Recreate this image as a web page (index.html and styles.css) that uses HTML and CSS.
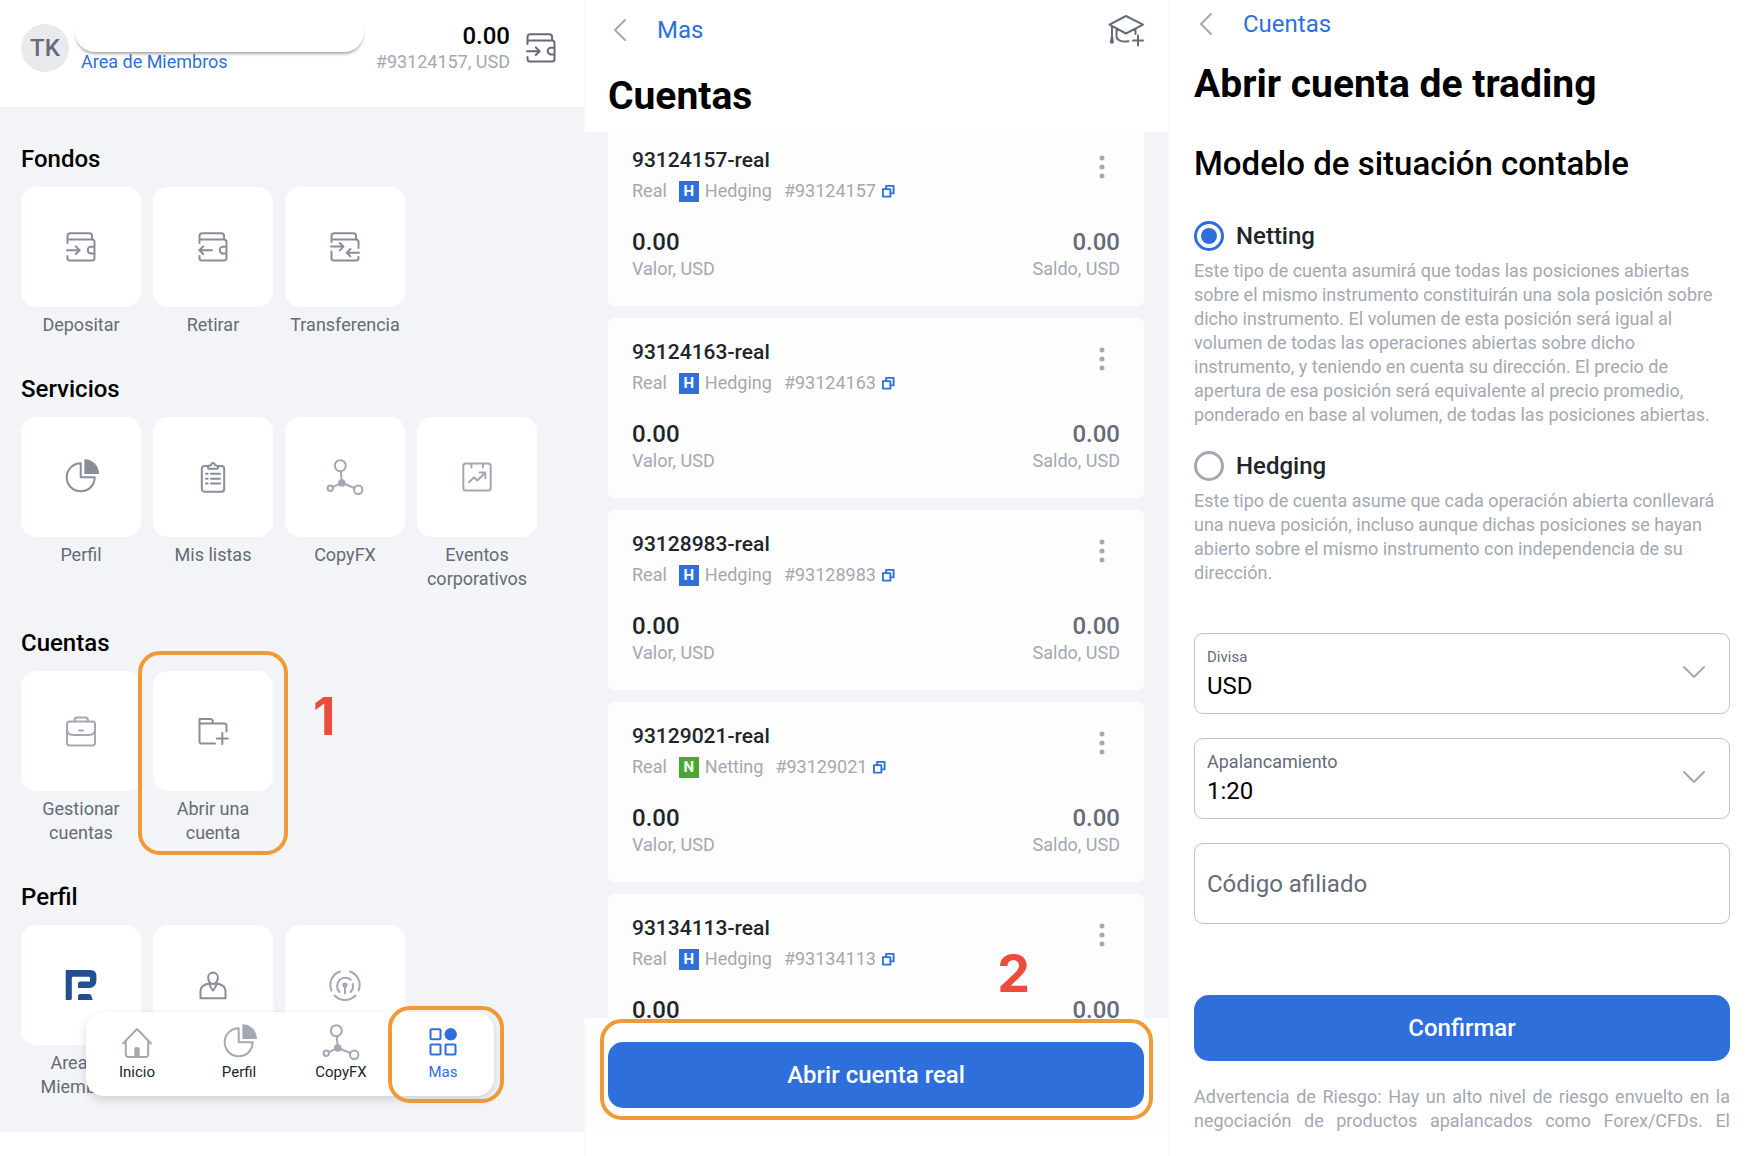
FILE: index.html
```html
<!DOCTYPE html>
<html lang="es">
<head>
<meta charset="utf-8">
<title>Cuentas</title>
<meta name="viewport" content="width=device-width, initial-scale=1">
<link rel="stylesheet" href="styles.css">
</head>
<body>
<svg class="sprite" aria-hidden="true">
  <symbol id="deposit" viewBox="0 0 36 36"><path d="M4.5 14V7a2.8 2.8 0 0 1 2.8-2.8h19a2.8 2.8 0 0 1 2.8 2.8v3.4M4.5 10.4H29a2.5 2.5 0 0 1 2.5 2.5V29a2.5 2.5 0 0 1-2.5 2.5H7A2.5 2.5 0 0 1 4.5 29v-2M31.5 17.8H28a3.3 3.3 0 0 0 0 6.6h3.5M4 21.2h12.5M12.8 17.4l3.8 3.8-3.8 3.8"/></symbol>
  <symbol id="withdraw" viewBox="0 0 36 36"><path d="M4.5 14V7a2.8 2.8 0 0 1 2.8-2.8h19a2.8 2.8 0 0 1 2.8 2.8v3.4M4.5 10.4H29a2.5 2.5 0 0 1 2.5 2.5V29a2.5 2.5 0 0 1-2.5 2.5H7A2.5 2.5 0 0 1 4.5 29v-2M31.5 17.8H28a3.3 3.3 0 0 0 0 6.6h3.5M4.5 21.2H17M8.2 17.4l-3.8 3.8L8.2 25"/></symbol>
  <symbol id="transfer" viewBox="0 0 36 36"><path d="M4.5 13V7a2.8 2.8 0 0 1 2.8-2.8h19a2.8 2.8 0 0 1 2.8 2.8v3.4M4.5 10.4H29a2.5 2.5 0 0 1 2.5 2.5V19M4.5 22.5V29A2.5 2.5 0 0 0 7 31.5h22a2.5 2.5 0 0 0 2.5-2.5v-1M4 17.6h12.5M12.8 14l3.7 3.6-3.7 3.8M32 23.8H20M23.4 20l-3.7 3.8 3.7 3.6"/></symbol>
  <symbol id="pie" viewBox="0 0 36 36"><path d="M17.7 4.3a14 14 0 1 0 14 14h-14z"/><path class="solid" d="M21.4 0.2A14.6 14.6 0 0 1 36 15H21.4z"/></symbol>
  <symbol id="list" viewBox="0 0 36 36"><path d="M13 7H9.500A2.700 2.700 0 0 0 6.800 9.700V30a2.700 2.700 0 0 0 2.700 2.700h17a2.700 2.700 0 0 0 2.700-2.700V9.700A2.700 2.700 0 0 0 26.500 7H23M13 8.200c0-1 .6-1.700 1.700-1.700 1 0 1.500-.6 1.700-1.300a1.700 1.700 0 0 1 3.200 0c.2.700.7 1.300 1.700 1.300 1.100 0 1.700.7 1.700 1.700 0 1-.6 1.600-1.500 1.600h-7c-.9 0-1.500-.6-1.500-1.600zM11 14.800h1.600M16 14.800h9M11 19.700h1.600M16 19.700h9M11 24.500h1.600M16 24.500h9"/></symbol>
  <symbol id="copyfx" viewBox="0 0 36 36"><circle cx="13.300" cy="6.700" r="5.500"/><circle class="solid" cx="14.800" cy="24" r="3.800"/><circle cx="3.300" cy="29.300" r="2.700"/><circle cx="31.200" cy="30.700" r="4.200"/><path d="M13.700 12.200l1 10M5.700 28.100l7-3.200M17.500 25l10 4"/></symbol>
  <symbol id="events" viewBox="0 0 36 36"><rect x="4.300" y="4.500" width="27.400" height="27" rx="2.500"/><path d="M12.400 5v3.500M24 5v3.500M10 23.200l5-5 3.300 3.300 7.500-7.500M20.500 13.500h5.800v5.800"/></symbol>
  <symbol id="case" viewBox="0 0 36 36"><rect x="4" y="8.500" width="28" height="24" rx="2.700"/><path d="M11.500 8.500V7.200c0-1.500 1.200-2.700 2.700-2.700h8c1.500 0 2.700 1.200 2.700 2.700v1.300M4 16c0 3.500 2 6 6 6h16c4 0 6-2.500 6-6M16 17.400h4"/></symbol>
  <symbol id="folder" viewBox="0 0 36 36"><path d="M4.500 10.500H29.500a2 2 0 0 1 2 2V18.500M20 30.500H6.500a2 2 0 0 1-2-2V6H15.500a2.200 2.200 0 0 1 2.200 2.200v2.300M27.300 20v11M21.800 25.400h11"/></symbol>
  <symbol id="brand" viewBox="0 0 36 36"><path class="solid" d="M2.700 3H28a5.400 5.400 0 0 1 5.400 5.400V14a7 7 0 0 1-7 7H15v-4.200a2.200 2.200 0 0 1 2.200-2.200H27V11a1.200 1.200 0 0 0-1.200-1.200H10A1.200 1.200 0 0 0 8.800 11v20.500A1.500 1.500 0 0 1 7.300 33H2.700zM15 33v-4a2 2 0 0 1 2-2h9a2.500 2.500 0 0 1 2.400 1.700L29.700 33z"/></symbol>
  <symbol id="person" viewBox="0 0 36 36"><path d="M14.300 16.600c-5 .8-8.800 3-8.800 7.700v7h25v-7c0-4.700-3.800-6.900-8.800-7.700M18 5.600a5 5 0 0 0-4.900 5c0 2.800 1.800 6.500 4.900 6.500s4.900-3.700 4.900-6.500A5 5 0 0 0 18 5.600zM14.300 16.600c.5 3 2 5 3.700 7 1.700-2 3.200-4 3.700-7"/></symbol>
  <symbol id="touch" viewBox="0 0 36 36"><path d="M4.500 23.500a14.200 14.200 0 0 1 8.500-19M23 4.500a14.200 14.200 0 0 1 8.500 19M7.500 28.500a14.500 14.500 0 0 0 21 0M12.500 25a8.500 8.500 0 0 1-2-8 8 8 0 0 1 13.200-4.200M26 17a9 9 0 0 1-2.500 8M18 18v8.500"/><circle class="solid" cx="18" cy="18" r="2.600"/></symbol>
  <symbol id="home" viewBox="0 0 36 36"><path d="M4 19.500L18 5l14 14.500M6.800 17v13.500A2.600 2.600 0 0 0 9.400 33h17.200a2.600 2.600 0 0 0 2.600-2.500V17"/><path class="solid" d="M15.300 33v-8.300c0-.8.600-1.400 1.400-1.400h2.600c.8 0 1.400.6 1.400 1.400V33z"/></symbol>
  <symbol id="more" viewBox="0 0 36 36"><rect x="5.500" y="5.300" width="10" height="10" rx="1"/><rect x="5.500" y="20.500" width="10" height="10" rx="1"/><rect x="20.500" y="20.500" width="10" height="10" rx="1"/><circle class="solid" cx="25.700" cy="10.300" r="6.200"/></symbol>
  <symbol id="back" viewBox="0 0 14 24"><path d="M12 2L2 12l10 10"/></symbol>
  <symbol id="down" viewBox="0 0 24 14"><path d="M2 2l10 10L22 2"/></symbol>
  <symbol id="cap" viewBox="0 0 36 32"><path d="M18 2L35 10.700 18 19.500 1.500 10.700zM4 12.500V24M8.500 15v7.500c0 3.500 5 6 12 4.800M27.500 15v5M30 21.500v10M25 26.500h10"/><path class="solid" d="M3 22h2l1 6.500-2 1.500-2.300-1.500z"/></symbol>
  <symbol id="copy" viewBox="0 0 14 14"><path d="M1 4.500h8v8H1zM4.500 4.500V1h8v8H9"/></symbol>
  <symbol id="dots" viewBox="0 0 6 24"><circle class="solid" cx="3" cy="3" r="2.500"/><circle class="solid" cx="3" cy="12" r="2.500"/><circle class="solid" cx="3" cy="21" r="2.500"/></symbol>
</svg>

<main class="screens">

  <section class="screen menu">
    <header class="profile">
      <span class="avatar">TK</span>
      <div class="user">
        <span class="user-name"></span>
        <a class="user-link" href="#">Area de Miembros</a>
      </div>
      <div class="balance">
        <span class="balance-value">0.00</span>
        <span class="balance-note">#93124157, USD</span>
      </div>
      <button class="icon-button wallet" type="button" aria-label="Depositar"><svg class="icon"><use href="#deposit"/></svg></button>
    </header>

    <div class="menu-body">
      <section class="group">
        <h2 class="group-title">Fondos</h2>
        <div class="tiles">
          <button class="tile" type="button"><span class="tile-box"><svg class="icon"><use href="#deposit"/></svg></span><span class="tile-label">Depositar</span></button>
          <button class="tile" type="button"><span class="tile-box"><svg class="icon"><use href="#withdraw"/></svg></span><span class="tile-label">Retirar</span></button>
          <button class="tile" type="button"><span class="tile-box"><svg class="icon"><use href="#transfer"/></svg></span><span class="tile-label">Transferencia</span></button>
        </div>
      </section>
      <section class="group">
        <h2 class="group-title">Servicios</h2>
        <div class="tiles">
          <button class="tile" type="button"><span class="tile-box"><svg class="icon"><use href="#pie"/></svg></span><span class="tile-label">Perfil</span></button>
          <button class="tile" type="button"><span class="tile-box"><svg class="icon"><use href="#list"/></svg></span><span class="tile-label">Mis listas</span></button>
          <button class="tile" type="button"><span class="tile-box light"><svg class="icon"><use href="#copyfx"/></svg></span><span class="tile-label">CopyFX</span></button>
          <button class="tile" type="button"><span class="tile-box light"><svg class="icon"><use href="#events"/></svg></span><span class="tile-label">Eventos corporativos</span></button>
        </div>
      </section>
      <section class="group">
        <h2 class="group-title">Cuentas</h2>
        <div class="tiles">
          <button class="tile" type="button"><span class="tile-box light"><svg class="icon"><use href="#case"/></svg></span><span class="tile-label">Gestionar cuentas</span></button>
          <button class="tile marked" type="button"><span class="tile-box"><svg class="icon"><use href="#folder"/></svg></span><span class="tile-label">Abrir una cuenta</span><span class="step step-one">1</span></button>
        </div>
      </section>
      <section class="group">
        <h2 class="group-title">Perfil</h2>
        <div class="tiles">
          <button class="tile" type="button"><span class="tile-box brand"><svg class="icon"><use href="#brand"/></svg></span><span class="tile-label">Area de Miembros</span></button>
          <button class="tile" type="button"><span class="tile-box"><svg class="icon"><use href="#person"/></svg></span></button>
          <button class="tile" type="button"><span class="tile-box light"><svg class="icon"><use href="#touch"/></svg></span></button>
        </div>
      </section>

      <nav class="tabbar">
        <a class="tab" href="#"><svg class="icon"><use href="#home"/></svg><span class="tab-label">Inicio</span></a>
        <a class="tab" href="#"><svg class="icon"><use href="#pie"/></svg><span class="tab-label">Perfil</span></a>
        <a class="tab" href="#"><svg class="icon"><use href="#copyfx"/></svg><span class="tab-label">CopyFX</span></a>
        <a class="tab active" href="#"><svg class="icon"><use href="#more"/></svg><span class="tab-label">Mas</span></a>
      </nav>
    </div>
  </section>

  <section class="screen accounts">
    <header class="accounts-head">
      <div class="crumbs">
        <a class="crumb" href="#"><svg class="icon-back"><use href="#back"/></svg>Mas</a>
        <button class="icon-button" type="button" aria-label="Cuenta demo"><svg class="icon-cap"><use href="#cap"/></svg></button>
      </div>
      <h1 class="title">Cuentas</h1>
    </header>

    <div class="accounts-list">
      <article class="card">
        <div class="card-top"><h2 class="card-title">93124157-real</h2><button class="dots-button" type="button" aria-label="Opciones"><svg class="icon-dots"><use href="#dots"/></svg></button></div>
        <p class="card-meta"><span>Real</span><span class="kind"><b class="badge">H</b>Hedging</span><span class="number">#93124157<svg class="icon-copy"><use href="#copy"/></svg></span></p>
        <div class="card-sums"><p class="sum"><span class="sum-value">0.00</span><span class="sum-label">Valor, USD</span></p><p class="sum end"><span class="sum-value">0.00</span><span class="sum-label">Saldo, USD</span></p></div>
      </article>
      <article class="card">
        <div class="card-top"><h2 class="card-title">93124163-real</h2><button class="dots-button" type="button" aria-label="Opciones"><svg class="icon-dots"><use href="#dots"/></svg></button></div>
        <p class="card-meta"><span>Real</span><span class="kind"><b class="badge">H</b>Hedging</span><span class="number">#93124163<svg class="icon-copy"><use href="#copy"/></svg></span></p>
        <div class="card-sums"><p class="sum"><span class="sum-value">0.00</span><span class="sum-label">Valor, USD</span></p><p class="sum end"><span class="sum-value">0.00</span><span class="sum-label">Saldo, USD</span></p></div>
      </article>
      <article class="card">
        <div class="card-top"><h2 class="card-title">93128983-real</h2><button class="dots-button" type="button" aria-label="Opciones"><svg class="icon-dots"><use href="#dots"/></svg></button></div>
        <p class="card-meta"><span>Real</span><span class="kind"><b class="badge">H</b>Hedging</span><span class="number">#93128983<svg class="icon-copy"><use href="#copy"/></svg></span></p>
        <div class="card-sums"><p class="sum"><span class="sum-value">0.00</span><span class="sum-label">Valor, USD</span></p><p class="sum end"><span class="sum-value">0.00</span><span class="sum-label">Saldo, USD</span></p></div>
      </article>
      <article class="card">
        <div class="card-top"><h2 class="card-title">93129021-real</h2><button class="dots-button" type="button" aria-label="Opciones"><svg class="icon-dots"><use href="#dots"/></svg></button></div>
        <p class="card-meta"><span>Real</span><span class="kind"><b class="badge netting">N</b>Netting</span><span class="number">#93129021<svg class="icon-copy"><use href="#copy"/></svg></span></p>
        <div class="card-sums"><p class="sum"><span class="sum-value">0.00</span><span class="sum-label">Valor, USD</span></p><p class="sum end"><span class="sum-value">0.00</span><span class="sum-label">Saldo, USD</span></p></div>
      </article>
      <article class="card">
        <div class="card-top"><h2 class="card-title">93134113-real</h2><button class="dots-button" type="button" aria-label="Opciones"><svg class="icon-dots"><use href="#dots"/></svg></button></div>
        <p class="card-meta"><span>Real</span><span class="kind"><b class="badge">H</b>Hedging</span><span class="number">#93134113<svg class="icon-copy"><use href="#copy"/></svg></span></p>
        <div class="card-sums"><p class="sum"><span class="sum-value">0.00</span></p><p class="sum end"><span class="sum-value">0.00</span></p></div>
      </article>
    </div>

    <footer class="accounts-foot">
      <span class="step step-two">2</span>
      <button class="primary" type="button">Abrir cuenta real</button>
    </footer>
  </section>

  <form class="screen opening">
    <div class="crumbs">
      <a class="crumb" href="#"><svg class="icon-back"><use href="#back"/></svg>Cuentas</a>
    </div>
    <h1 class="title">Abrir cuenta de trading</h1>
    <h2 class="subtitle">Modelo de situación contable</h2>

    <div class="option">
      <label class="option-head"><input class="radio" type="radio" name="model" checked>Netting</label>
      <p class="option-text">Este tipo de cuenta asumirá que todas las posiciones abiertas sobre el mismo instrumento constituirán una sola posición sobre dicho instrumento. El volumen de esta posición será igual al volumen de todas las operaciones abiertas sobre dicho instrumento, y teniendo en cuenta su dirección. El precio de apertura de esa posición será equivalente al precio promedio, ponderado en base al volumen, de todas las posiciones abiertas.</p>
    </div>
    <div class="option">
      <label class="option-head"><input class="radio" type="radio" name="model">Hedging</label>
      <p class="option-text">Este tipo de cuenta asume que cada operación abierta conllevará una nueva posición, incluso aunque dichas posiciones se hayan abierto sobre el mismo instrumento con independencia de su dirección.</p>
    </div>

    <div class="fields">
      <div class="field">
        <label class="field-label small" for="currency">Divisa</label>
        <select class="field-select" id="currency"><option>USD</option></select>
        <svg class="icon-down"><use href="#down"/></svg>
      </div>
      <div class="field">
        <label class="field-label" for="leverage">Apalancamiento</label>
        <select class="field-select" id="leverage"><option>1:20</option></select>
        <svg class="icon-down"><use href="#down"/></svg>
      </div>
      <input class="field field-input" type="text" placeholder="Código afiliado" aria-label="Código afiliado">
    </div>

    <button class="primary" type="submit">Confirmar</button>
    <p class="warning">Advertencia de Riesgo: Hay un alto nivel de riesgo envuelto en la negociación de productos apalancados como Forex/CFDs. El</p>
  </form>

</main>
</body>
</html>
```
FILE: styles.css
```css
:root {
  --blue: #2f6fdc;
  --ink: #212529;
  --slate: #656b78;
  --mute: #a3a8b3;
  --icon: #888d9a;
  --ground: #f3f4f7;
  --card: #fdfdfd;
  --mark: #f09a37;
}

* {
  box-sizing: border-box;
}

body,
h1,
h2,
p {
  margin: 0;
}

body {
  font-family: Roboto, "Liberation Sans", sans-serif;
  font-size: 18px;
  line-height: 24px;
  color: var(--ink);
  background: #fff;
}

a {
  color: var(--blue);
  text-decoration: none;
}

button,
input,
select {
  font: inherit;
  color: inherit;
}

button {
  border: 0;
  padding: 0;
  background: none;
}

svg {
  display: block;
  flex: none;
  overflow: visible;
  fill: none;
  stroke: currentColor;
  stroke-width: 2;
  stroke-linecap: round;
  stroke-linejoin: round;
}

symbol {
  overflow: visible;
}

.solid {
  fill: currentColor;
  stroke: none;
}

.sprite {
  position: absolute;
  width: 0;
  height: 0;
}

.icon {
  width: 36px;
  height: 36px;
}

.screens {
  display: grid;
  grid-template-columns: repeat(3, 1fr);
  height: 100vh;
}

.screen {
  display: flex;
  flex-direction: column;
  min-width: 0;
  min-height: 0;
}

.screen + .screen {
  border-left: 1px solid #f7f7f9;
}

/* Menu */

.menu,
.accounts {
  padding-bottom: 24px;
}

.profile {
  display: flex;
  align-items: center;
  flex: none;
  min-height: 107px;
  padding: 12px 25px 24px 21px;
}

.avatar {
  display: grid;
  place-items: center;
  width: 48px;
  height: 48px;
  border-radius: 50%;
  background: #e9eaed;
  color: var(--slate);
  font-size: 24px;
  font-weight: 500;
}

.user {
  display: flex;
  flex-direction: column;
  flex: 1;
  align-self: stretch;
  margin: 0 12px 0 6px;
}

.user-name {
  height: 40px;
  border-radius: 20px;
  background: #fff;
  box-shadow: 0 3px 3px -1px rgba(0, 0, 0, 0.35);
}

.user-link {
  padding-left: 6px;
  line-height: 20px;
}

.balance {
  display: flex;
  flex-direction: column;
  text-align: right;
}

.balance-value {
  font-size: 24px;
  font-weight: 500;
  line-height: 28px;
  color: #000;
}

.balance-note {
  color: var(--mute);
}

.icon-button {
  color: var(--slate);
}

.wallet {
  margin-left: 13px;
}

.menu-body {
  position: relative;
  display: flex;
  flex: 1;
  flex-direction: column;
  gap: 36px;
  min-height: 0;
  padding: 36px 22px 0 21px;
  background: var(--ground);
}

.group {
  display: flex;
  flex-direction: column;
  gap: 12px;
}

.group-title {
  font-size: 24px;
  font-weight: 500;
  line-height: 32px;
  color: #000;
}

.tiles {
  display: grid;
  grid-template-columns: repeat(4, 120px);
  gap: 12px;
}

.tile {
  display: flex;
  flex-direction: column;
  gap: 6px;
  color: var(--slate);
  text-align: center;
}

.tile-box {
  display: grid;
  place-items: center;
  width: 100%;
  height: 120px;
  border-radius: 15px;
  background: #fff;
  color: var(--icon);
}

.tile-box.light {
  color: var(--mute);
}

.tile-box.brand {
  color: #22508f;
}

.tile-label {
  width: 100%;
}

.marked,
.active,
.accounts-foot {
  position: relative;
}

.marked::after,
.active::after,
.accounts-foot::after {
  content: "";
  position: absolute;
  border: 4px solid var(--mark);
  border-radius: 22px;
  pointer-events: none;
}

.marked::after {
  inset: -20px -15px -10px -15px;
}

.step {
  position: absolute;
  font-family: Inter, "Liberation Sans", sans-serif;
  font-size: 52px;
  font-weight: 700;
  line-height: 54px;
  color: #eb4d3d;
}

.step-one {
  top: 19px;
  left: 160px;
}

.step-two {
  top: -71px;
  right: 138px;
}

.tabbar {
  position: absolute;
  bottom: 36px;
  left: 86px;
  display: grid;
  grid-template-columns: repeat(4, 102px);
  height: 84px;
  border-radius: 18px;
  background: #fff;
  box-shadow: 0 4px 10px rgba(0, 0, 0, 0.14);
}

.tab {
  display: flex;
  flex-direction: column;
  align-items: center;
  gap: 2px;
  padding-top: 12px;
  color: var(--mute);
}

.tab-label {
  font-size: 15px;
  line-height: 20px;
  color: var(--ink);
}

.active,
.active .tab-label {
  color: var(--blue);
}

.active::after {
  inset: -6px -10px -7px -4px;
}

/* Accounts */

.accounts-head {
  position: relative;
  z-index: 1;
  flex: none;
  padding: 6px 24px 12px 23px;
  background: #fff;
}

.crumbs {
  display: flex;
  align-items: center;
  justify-content: space-between;
  height: 48px;
}

.crumb {
  display: flex;
  align-items: center;
  gap: 30px;
  padding-left: 5px;
  font-size: 24px;
}

.icon-back {
  width: 14px;
  height: 24px;
  color: var(--mute);
}

.icon-cap {
  width: 36px;
  height: 32px;
}

.title {
  font-size: 39px;
  font-weight: 700;
  line-height: 48px;
  color: #000;
}

.accounts-head .title {
  margin-top: 18px;
}

.accounts-list {
  display: flex;
  flex: 1;
  flex-direction: column;
  gap: 12px;
  min-height: 0;
  margin-top: -6px;
  padding: 0 24px 0 23px;
  overflow: hidden;
  background: var(--ground);
}

.card {
  flex: none;
  height: 180px;
  padding: 22px 24px;
  border-radius: 6px;
  background: var(--card);
}

.card-top {
  display: flex;
  justify-content: space-between;
  height: 31px;
}

.card-title {
  font-size: 21px;
  font-weight: 500;
  line-height: 24px;
}

.dots-button {
  width: 36px;
  padding: 7px 15px 0;
  color: var(--mute);
}

.icon-dots {
  width: 6px;
  height: 24px;
}

.card-meta {
  display: flex;
  align-items: center;
  gap: 12px;
  color: var(--mute);
}

.kind,
.number {
  display: flex;
  align-items: center;
  gap: 6px;
}

.badge {
  width: 20px;
  background: var(--blue);
  color: #fff;
  font-size: 15px;
  line-height: 21px;
  text-align: center;
}

.badge.netting {
  background: #4aa832;
}

.icon-copy {
  width: 13px;
  height: 13px;
  color: var(--blue);
}

.card-sums {
  display: flex;
  justify-content: space-between;
  margin-top: 24px;
}

.sum {
  display: flex;
  flex-direction: column;
}

.sum.end {
  text-align: right;
}

.sum-value {
  font-size: 24px;
  font-weight: 500;
  line-height: 30px;
}

.end .sum-value {
  color: var(--slate);
}

.sum-label {
  color: var(--mute);
}

.accounts-foot {
  z-index: 1;
  flex: none;
  padding: 24px 24px 24px 23px;
  background: var(--card);
}

.accounts-foot::after {
  inset: 1px 15px 12px 15px;
}

.primary {
  width: 100%;
  height: 66px;
  border-radius: 15px;
  background: var(--blue);
  color: #fff;
  font-size: 24px;
  font-weight: 500;
}

/* Opening form */

.opening {
  padding: 0 22px 0 25px;
}

.opening .title {
  margin-top: 12px;
}

.subtitle {
  margin: 36px 0 37px;
  font-size: 33px;
  font-weight: 500;
  line-height: 40px;
  color: #000;
}

.option {
  margin-bottom: 24px;
}

.option-head {
  display: flex;
  align-items: center;
  gap: 12px;
  font-size: 24px;
  font-weight: 500;
  line-height: 30px;
}

.radio {
  display: grid;
  place-items: center;
  width: 30px;
  height: 30px;
  margin: 0;
  border: 3px solid var(--mute);
  border-radius: 50%;
  appearance: none;
}

.radio:checked {
  border-color: var(--blue);
}

.radio:checked::before {
  content: "";
  width: 16px;
  height: 16px;
  border-radius: 50%;
  background: var(--blue);
}

.option-text {
  margin-top: 8px;
  color: var(--mute);
}

.fields {
  display: flex;
  flex-direction: column;
  gap: 24px;
  margin: 24px 0 71px;
}

.field {
  position: relative;
  display: flex;
  flex-direction: column;
  width: 100%;
  height: 81px;
  padding: 11px 12px;
  border: 1px solid #c0c3ca;
  border-radius: 9px;
}

.field-label {
  color: var(--slate);
}

.field-label.small {
  font-size: 15px;
}

.field-select {
  height: 38px;
  padding: 0;
  border: 0;
  background: none;
  color: #000;
  font-size: 24px;
  appearance: none;
}

.icon-down {
  position: absolute;
  top: 31px;
  right: 23px;
  width: 24px;
  height: 14px;
  color: var(--mute);
}

.field-input {
  background: #fff;
  font-size: 24px;
}

.field-input::placeholder {
  color: var(--slate);
  opacity: 1;
}

.opening .primary {
  flex: none;
}

.warning {
  margin-top: 24px;
  color: var(--mute);
  text-align: justify;
  text-align-last: justify;
}
```
